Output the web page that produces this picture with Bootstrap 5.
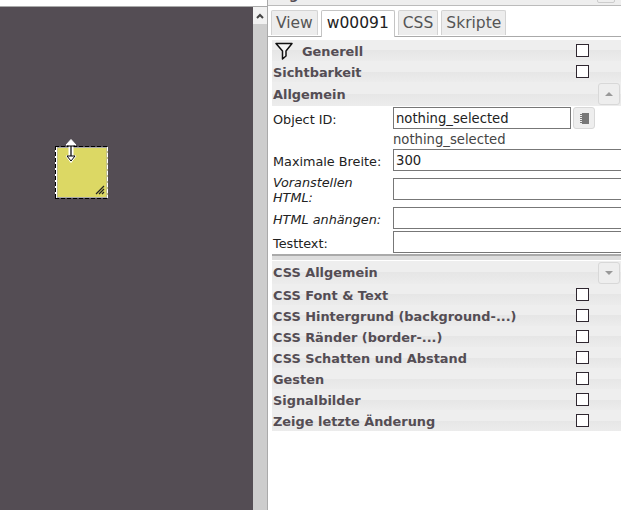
<!DOCTYPE html>
<html lang="de">
<head>
<meta charset="UTF-8">
<title>Widget Editor</title>
<link rel="stylesheet" href="https://cdn.jsdelivr.net/npm/bootstrap@5.3.0/dist/css/bootstrap.min.css">
<style>
html, body { height: 100%; overflow: hidden; }
body { font-family: "DejaVu Sans", sans-serif; font-size: 13px; color: #222; background: #fff; }
.app { width: 621px; height: 510px; }
.left-pane { width: 268px; border-right: 1px solid #aaa; }
.top-strip { height: 7px; border-bottom: 1px solid #aaa; }
.canvas { width: 253px; background: #544d54; position: relative; }
.scroll-track { width: 14px; background: #cdcdcd; }
.scroll-up { height: 17px; background: #f1f1f1; }
.widget-box { position: absolute; left: 55px; top: 139px; }
.arrow-handle { position: absolute; left: 64px; top: 132px; }
.right-pane { width: 353px; }
.head-strip { height: 6px; background: #eee; border-bottom: 1px solid #bbb; overflow: hidden; position: relative; }
.head-txt { position: absolute; left: 21px; top: -13px; font-weight: 700; font-size: 13px; line-height: 16px; color: #544d54; }
.head-btn { position: absolute; left: 329px; top: -3px; width: 18px; height: 6px; border: 1px solid #ccc; border-radius: 2px; }
.tab-bar { height: 31px; padding: 4px 0 0 3px; gap: 3px; border-bottom: 1px solid #aaa; }
.tab-item { height: 25px; padding: 0 4px; font-size: 15.5px; line-height: 24px; color: #555; background: #ededed; border: 1px solid #d3d3d3; border-bottom: 0; border-radius: 2px 2px 0 0; }
.tab-item.on { height: 27px; padding: 0 5px; color: #222; background: #fff; border-color: #c4c4c4; position: relative; }
.prop-list { padding: 3px 0 0 4px; }
.grp-row { height: 21px; font-weight: 700; color: #544d54; padding-left: 1px; background: linear-gradient(#eee 50%, #e6e6e6 50%, #ececec); line-height: 23px; font-size: 12.9px; }
.grp-row.big { height: 24px; line-height: 26px; }
.grp-row.sec { height: 23px; line-height: 24px; }
.gen-txt { margin-top: 2px; }
.grp-check { position: absolute; left: 304px; top: 4px; width: 13px; height: 13px; background: #fff; border: 1px solid #2f2730; }
.grp-btn { position: absolute; left: 326px; top: 1px; width: 22px; height: 22px; background: #eee; border: 1px solid #d8d8d8; border-radius: 3px; }
.tri-up, .tri-down { position: absolute; left: 6px; top: 8px; border: 4px solid transparent; }
.tri-up { border-bottom: 4px solid #999; border-top: 0; }
.tri-down { border-top: 4px solid #999; border-bottom: 0; }
.fld-row { display: flex; align-items: center; margin-top: 2px; }
.fld-row.first { margin-top: 1px; }
.fld-row.note { height: 20px; margin-top: 0; padding-top: 2px; font-size: 13.2px; color: #444; }
.fld-row.note + .fld-row { margin-top: 0; }
.fld-label { width: 121px; flex: none; line-height: 15px; font-size: 12.8px; padding: 2px 0 0 1px; }
.fld-input { width: 240px; flex: none; height: 22px; border: 1px solid #777; padding: 0 2px; font: 13.2px "DejaVu Sans", sans-serif; color: #222; border-radius: 0; outline: 0; }
.id-btn { width: 22px; height: 22px; margin-left: 2px; background: #eee; border: 1px solid #d8d8d8; border-radius: 3px; }
.id-input { width: 178px; }
.sep-bar { height: 6px; background: #ddd; border-top: 2px solid #aaa; margin-top: 1px; margin-bottom: 1px; }
.italic-lbl { font-style: italic; }
.funnel { margin: 0 9px 0 2px; }
</style>
</head>
<body>
<div class="app d-flex">
  <div class="left-pane d-flex flex-column flex-shrink-0">
    <div class="top-strip"></div>
    <div class="d-flex flex-grow-1 position-relative">
      <div class="canvas">
        <svg class="widget-box" width="54" height="53" viewBox="0 0 54 53">
          <rect x="1" y="1" width="52" height="51" fill="#dcd864"/>
          <rect x="2" y="1.500" width="50" height="50" fill="none" stroke="#aaa" stroke-width="1"/>
          <path d="M.5 0V53M1.500 0V53" stroke="#fff" stroke-width="1"/>
          <path d="M.5 0V53" stroke="#000" stroke-width="1" stroke-dasharray="4 2"/>
          <path d="M0 .5H54M0 52.500H54" stroke="#000" stroke-width="1" stroke-dasharray="4 2"/>
          <path d="M52.500 1V52" stroke="#fff" stroke-width="1" stroke-dasharray="4 2"/>
          <path d="M41 48L49 40M44 48L49 43M47 48L49 46" stroke="#222" stroke-width="1.200" fill="none"/>
        </svg>
        <svg class="arrow-handle" width="14" height="24" viewBox="0 0 14 24">
          <path d="M7 .5L12 6H9V17H12L7 23.500L2 17H5V6H2Z" fill="#fff" stroke="#fff" stroke-width="1"/>
          <path d="M3 7H11M3 17H11M7 7V17" stroke="#000" stroke-width="1.200" fill="none"/>
          <path d="M3 17L7 22L11 17" stroke="#000" fill="none"/>
        </svg>
      </div>
      <div class="scroll-track">
        <div class="scroll-up d-flex justify-content-center align-items-center">
          <svg width="8" height="6" viewBox="0 0 8 6"><path d="M1 5L4 2L7 5" stroke="#444" stroke-width="2" fill="none"/></svg>
        </div>
      </div>
    </div>
  </div>
  <div class="right-pane">
    <div class="head-strip"><span class="head-txt">g</span><span class="head-btn"></span></div>
    <div class="tab-bar d-flex align-items-start">
      <div class="tab-item">View</div>
      <div class="tab-item on">w00091</div>
      <div class="tab-item">CSS</div>
      <div class="tab-item">Skripte</div>
    </div>
    <div class="prop-list">
      <div class="grp-row position-relative d-flex align-items-center">
        <svg class="funnel" width="18" height="18" viewBox="0 0 18 18"><path d="M1 1.500H17L11 9V14L7.500 17V9Z" fill="#f6f6f6" stroke="#111" stroke-width="1.500" stroke-linejoin="round"/></svg>
        <span class="gen-txt">Generell</span>
        <span class="grp-check"></span>
      </div>
      <div class="grp-row position-relative">Sichtbarkeit<span class="grp-check"></span></div>
      <div class="grp-row big position-relative">Allgemein<span class="grp-btn"><span class="tri-up"></span></span></div>
      <div class="fld-row first">
        <span class="fld-label">Object ID:</span>
        <input class="fld-input id-input" value="nothing_selected">
        <span class="id-btn d-flex align-items-center justify-content-center">
          <svg width="9" height="11" viewBox="0 0 9 11"><rect x="2" width="7" height="11" fill="#777"/><path d="M0 1.500H3M0 3.500H3M0 5.500H3M0 7.500H3M0 9.500H3" stroke="#777"/></svg>
        </span>
      </div>
      <div class="fld-row note"><span class="fld-label"></span><span>nothing_selected</span></div>
      <div class="fld-row"><span class="fld-label">Maximale Breite:</span><input class="fld-input" value="300"></div>
      <div class="fld-row"><span class="fld-label italic-lbl">Voranstellen HTML:</span><input class="fld-input"></div>
      <div class="fld-row"><span class="fld-label italic-lbl">HTML anhängen:</span><input class="fld-input"></div>
      <div class="fld-row"><span class="fld-label">Testtext:</span><input class="fld-input"></div>
      <div class="sep-bar"></div>
      <div class="grp-row sec position-relative">CSS Allgemein<span class="grp-btn"><span class="tri-down"></span></span></div>
      <div class="grp-row position-relative">CSS Font &amp; Text<span class="grp-check"></span></div>
      <div class="grp-row position-relative">CSS Hintergrund (background-...)<span class="grp-check"></span></div>
      <div class="grp-row position-relative">CSS Ränder (border-...)<span class="grp-check"></span></div>
      <div class="grp-row position-relative">CSS Schatten und Abstand<span class="grp-check"></span></div>
      <div class="grp-row position-relative">Gesten<span class="grp-check"></span></div>
      <div class="grp-row position-relative">Signalbilder<span class="grp-check"></span></div>
      <div class="grp-row position-relative">Zeige letzte Änderung<span class="grp-check"></span></div>
    </div>
  </div>
</div>
<script src="https://cdn.jsdelivr.net/npm/bootstrap@5.3.0/dist/js/bootstrap.bundle.min.js"></script>
</body>
</html>
